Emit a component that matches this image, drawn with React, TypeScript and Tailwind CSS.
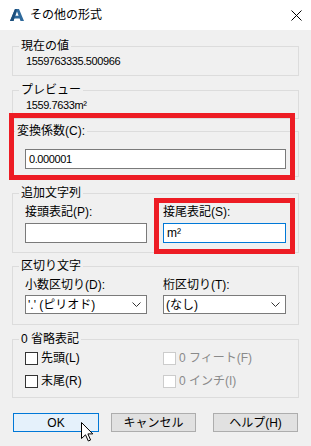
import React from "react";

const font = "font-['Liberation_Sans','Noto_Sans_CJK_JP',sans-serif]";

const Group: React.FC<{ label: string; labelClass?: string; className?: string; children: React.ReactNode }> = ({
  label,
  labelClass = "ml-[6px]",
  className = "",
  children,
}) => (
  <fieldset className={`mx-[12px] border border-[#dcdcdc] ${className}`}>
    <legend className={`${labelClass} px-[2px] text-[12px] leading-[14px]`}>{label}</legend>
    {children}
  </fieldset>
);

const Chevron = () => (
  <svg width="9" height="5" viewBox="0 0 9 5" className="shrink-0">
    <path d="M0.5 0.5 L4.5 4.5 L8.5 0.5" fill="none" stroke="#333" strokeWidth="1" />
  </svg>
);

const Check: React.FC<{ label: string; disabled?: boolean }> = ({ label, disabled }) => (
  <div className="flex items-center h-[14px]">
    <span
      className={`w-[13px] h-[13px] bg-white border ${disabled ? "border-[#cccccc]" : "border-[#333333]"}`}
    />
    <span className={`ml-[3px] text-[12px] leading-[14px] ${disabled ? "text-[#8a8a8a]" : "text-black"}`}>
      {label}
    </span>
  </div>
);

export default function App() {
  return (
    <div className={`relative w-[311px] h-[446px] bg-[#f0f0f0] overflow-hidden text-black ${font}`}>
      {/* title bar */}
      <div className="h-[30px] bg-white flex items-center">
        <svg width="14" height="12" viewBox="0 0 14 12" className="ml-[10px]">
          <path d="M5 0 H9 L14 12 H10.5 L9.6 9.5 H4.4 L3.5 12 H0 Z M5.4 6.8 H8.6 L7 2.6 Z" fill="#2f6a9c" fillRule="evenodd" />
          <path d="M5 0 H7 L3.5 12 H0 Z" fill="#1d4f7c" />
        </svg>
        <span className="ml-[6px] text-[12px] leading-[14px]">その他の形式</span>
        <svg width="11" height="11" viewBox="0 0 11 11" className="ml-auto mr-[9px]">
          <path d="M0.5 0.5 L10.5 10.5 M10.5 0.5 L0.5 10.5" stroke="#000" strokeWidth="1" />
        </svg>
      </div>

      <Group label="現在の値" className="mt-[9px]">
        <div className="pl-[13px] pt-[1px] pb-[7px] text-[11px] leading-[14px] tracking-[-0.4px]">1559763335.500966</div>
      </Group>

      <Group label="プレビュー" className="mt-[7px]">
        <div className="pl-[13px] pt-[1px] pb-[6px] text-[11px] leading-[14px] tracking-[-0.4px]">1559.7633m²</div>
      </Group>

      <Group label="変換係数(C):" labelClass="ml-[2px]" className="mt-[5px]">
        <div className="px-[12px] pt-[11px] pb-[7px]">
          <div className="h-[20px] bg-white border border-[#7a7a7a] flex items-center pl-[3px] text-[11px] tracking-[-0.4px]">
            0.000001
          </div>
        </div>
      </Group>

      <Group label="追加文字列" className="mt-[9px]">
        <div className="flex px-[12px] pt-[5px] pb-[9px]">
          <div className="w-[122px]">
            <div className="text-[12px] leading-[14px]">接頭表記(P):</div>
            <div className="mt-[4px] h-[20px] bg-white border border-[#7a7a7a]" />
          </div>
          <div className="ml-[16px] w-[123px]">
            <div className="text-[12px] leading-[14px]">接尾表記(S):</div>
            <div className="mt-[4px] h-[20px] bg-white border border-[#0078d7] flex items-center pl-[3px] text-[12px]">
              m²
            </div>
          </div>
        </div>
      </Group>

      <Group label="区切り文字" className="mt-[6px]">
        <div className="flex px-[12px] pt-[5px] pb-[10px]">
          <div className="w-[122px]">
            <div className="text-[12px] leading-[14px]">小数区切り(D):</div>
            <div className="mt-[3px] h-[19px] bg-white border border-[#7a7a7a] flex items-center pl-[2px] pr-[5px] text-[12px]">
              <span className="flex-1">'.' (ピリオド)</span>
              <Chevron />
            </div>
          </div>
          <div className="ml-[16px] w-[123px]">
            <div className="text-[12px] leading-[14px]">桁区切り(T):</div>
            <div className="mt-[3px] h-[19px] bg-white border border-[#7a7a7a] flex items-center pl-[2px] pr-[5px] text-[12px]">
              <span className="flex-1">(なし)</span>
              <Chevron />
            </div>
          </div>
        </div>
      </Group>

      <Group label="0 省略表記" className="mt-[7px]">
        <div className="grid grid-cols-[138px_1fr] gap-y-[9px] px-[12px] pt-[5px] pb-[9px]">
          <Check label="先頭(L)" />
          <Check label="0 フィート(F)" disabled />
          <Check label="末尾(R)" />
          <Check label="0 インチ(I)" disabled />
        </div>
      </Group>

      <div className="flex mt-[15px] pl-[13px] text-[12px]">
        <button className="w-[86px] h-[19px] bg-[#e5f1fb] border border-[#0078d7] leading-none">OK</button>
        <button className="ml-[12px] w-[85px] h-[19px] bg-[#e1e1e1] border border-[#adadad] leading-none">
          キャンセル
        </button>
        <button className="ml-[17px] w-[85px] h-[19px] bg-[#e1e1e1] border border-[#adadad] leading-none">
          ヘルプ(H)
        </button>
      </div>

      {/* red annotation boxes */}
      <div className="absolute left-[9px] top-[113px] w-[286px] h-[67px] border-[5px] border-[#ed1c24]" />
      <div className="absolute left-[154px] top-[198px] w-[141px] h-[56px] border-[5px] border-[#ed1c24]" />

      {/* mouse cursor */}
      <svg width="13" height="20" viewBox="0 0 13 20" className="absolute left-[81px] top-[422px]">
        <path
          d="M0.5 0.5 L0.5 16.5 L4.5 12.8 L7.3 19 L9.6 18 L6.9 11.9 L11.8 11.9 Z"
          fill="#fff"
          stroke="#000"
          strokeWidth="1"
          strokeLinejoin="miter"
        />
      </svg>
    </div>
  );
}
